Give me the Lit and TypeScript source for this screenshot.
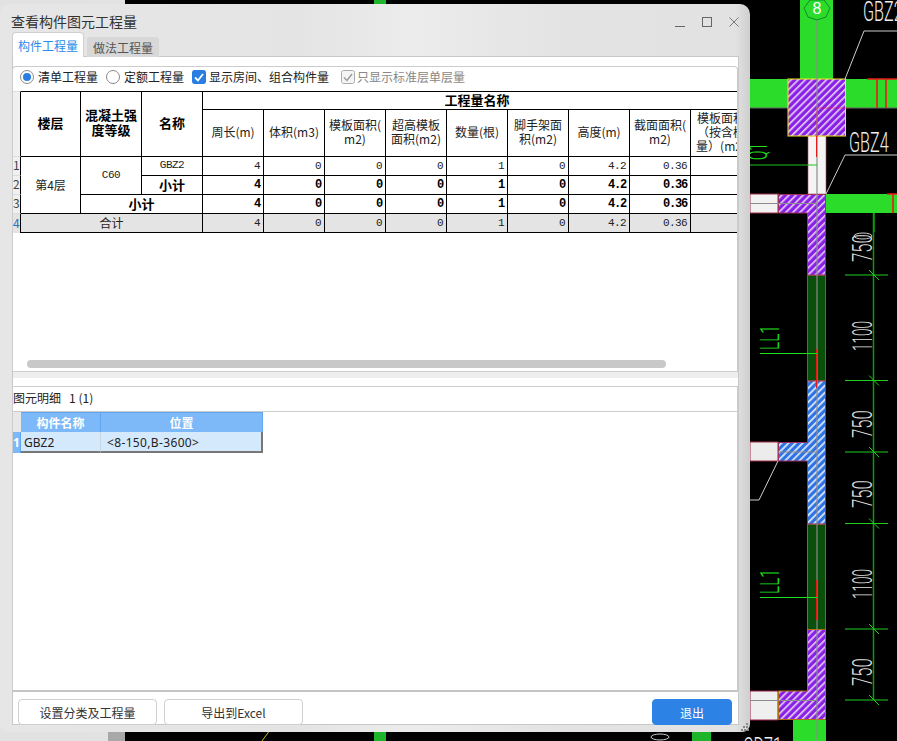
import { LitElement, html, css, svg } from 'lit';
import { customElement } from 'lit/decorators.js';

const HEADS = ['周长(m)', '体积(m3)', '模板面积(<br>m2)', '超高模板<br>面积(m2)', '数量(根)', '脚手架面<br>积(m2)', '高度(m)', '截面面积(<br>m2)', '模板面积<br>（按含模<br>量）(m2)'];
const VALUES = ['4', '0', '0', '0', '1', '0', '4.2', '0.36', ''];

@customElement('cad-view')
export class CadView extends LitElement {
  static styles = css`
    :host { position: absolute; inset: 0; display: block; }
    svg { display: block; }
    .label { font-family: Roboto, "Liberation Sans", sans-serif; font-weight: 300; }
  `;

  dim(y: number, text: string) {
    const sx = text.length === 3 ? 0.62 : 0.5;
    return svg`<text class="label" font-size="27" fill="#ddd" transform="translate(872,${y}) rotate(-90) scale(${sx},1)">${text}</text>`;
  }

  tick(y: number) {
    return svg`
      <line x1="845" x2="888" y1=${y} y2=${y} stroke="#1fd01f"/>
      <line x1="869" x2="879" y1=${y - 5} y2=${y + 5} stroke="#1fd01f"/>`;
  }

  render() {
    const g = '#2bdc2b';
    return html`<svg width="897" height="741" viewBox="0 0 897 741">
      <defs>
        <pattern id="purple" width="5" height="5" patternUnits="userSpaceOnUse" patternTransform="rotate(45)">
          <rect width="5" height="5" fill="#8a1fe6"/><rect width="1.6" height="5" fill="#e6d4fa"/>
        </pattern>
        <pattern id="blue" width="5" height="5" patternUnits="userSpaceOnUse" patternTransform="rotate(45)">
          <rect width="5" height="5" fill="#2f72e4"/><rect width="1.8" height="5" fill="#d6e6fb"/>
        </pattern>
      </defs>
      <rect width="897" height="741" fill="#000"/>
      <rect width="125" height="741" fill="#e2e2e2"/>
      <rect x="108" y="732" width="17" height="9" fill="#a8a8a8"/>
      <rect x="374" width="12" height="6" fill="#1fb52a"/>
      <rect x="374" y="730" width="12" height="11" fill="#1fb52a"/>
      <rect x="692" y="730" width="19" height="11" fill="#1fb52a"/>
      <line x1="262" y1="741" x2="270" y2="730" stroke="#c8c020"/>
      <ellipse cx="660" cy="737" rx="9" ry="3" fill="none" stroke="#ccc"/>

      <rect x="800" width="33" height="79" fill=${g}/>
      <rect x="750" y="79" width="147" height="29" fill=${g}/>
      <line x1="750" x2="897" y1="108" y2="108" stroke="#666"/>
      <rect x="826" y="194" width="71" height="19" fill=${g}/>
      <rect x="793" y="720" width="33" height="21" fill=${g}/>

      <rect x="808" y="136" width="18" height="58" fill="#f4f4f4" stroke="#b05060" stroke-width=".6"/>
      <rect x="750" y="194" width="28" height="19" fill="#f2f2f2" stroke="#a03048"/>
      <rect x="750" y="442" width="28" height="19" fill="#ececec" stroke="#a03048"/>
      <rect x="750" y="691" width="28" height="29" fill="#efefef" stroke="#902040"/>

      <rect x="807.5" y="275.5" width="18" height="105" fill="#0a4f0a" stroke="#6f6a10"/>
      <rect x="807.5" y="524.5" width="18" height="105" fill="#0a4f0a" stroke="#8a6a10"/>

      <rect x="788" y="79" width="57.5" height="57" fill="url(#purple)" stroke="#f2ee10"/>
      <path d="M778.5 194.5H825.5V275H807.5V213H778.5Z" fill="url(#purple)" stroke="#a03060"/>
      <path d="M807.5 381H825.5V524H807.5V461H778.5V442.5H807.5Z" fill="url(#blue)" stroke="#a03060"/>
      <path d="M807.5 629.5H825.5V719.5H778.5V691H807.5Z" fill="url(#purple)" stroke="#b07010"/>

      <line x1="817" x2="817" y1="0" y2="741" stroke="#8c8c8c" stroke-width="1.2"/>
      <line x1="750" x2="817" y1="203.500" y2="203.500" stroke="#8c8c8c"/>
      <line x1="778" x2="817" y1="452" y2="452" stroke="#8c8c8c"/>
      <line x1="750" x2="817" y1="700.500" y2="700.500" stroke="#8c8c8c"/>

      <path d="M804 8 810 0H824L830 8 826 17 817 20 808 17Z" fill=${g} stroke="#118a2a"/>
      <text x="817" y="14" text-anchor="middle" font-size="16" fill="#fff" font-family="Liberation Sans, sans-serif">8</text>

      <path d="M845 79 864 31H897M826 194 845 155H897M778 461 759 500H750" fill="none" stroke="#ccc"/>
      <text class="label" font-size="27" fill="#eee" transform="translate(863,21) scale(.6,1)">GBZ2</text>
      <text class="label" font-size="27" fill="#eee" transform="translate(849,152) scale(.6,1)">GBZ4</text>
      <text class="label" font-size="27" fill="#eee" transform="translate(743,757) scale(.6,1)">CD71</text>

      <path d="M867 79H897M877 79V108M886 79V108M887 194H897M893 194V213" fill="none" stroke="#f01818" stroke-width="1.6"/>
      <path d="M817 108H850M817 108V136" fill="none" stroke="#e81818" stroke-width="1" opacity=".5"/>
      <path d="M816.500 136V157M816.500 349V388M816.500 580V620" fill="none" stroke="#e81818" stroke-width="1"/>
      <line x1="874" x2="874" y1="213" y2="232" stroke="#0a9a0a" stroke-width="1.500"/>
      <ellipse cx="863" cy="236" rx="9" ry="3" fill="none" stroke="#ccc"/>

      <line x1="750" x2="817" y1="165" y2="165" stroke="#1fc01f"/>
      <line x1="760" x2="817" y1="353.500" y2="353.500" stroke="#1fe01f"/>
      <line x1="760" x2="817" y1="597.500" y2="597.500" stroke="#1fe01f"/>
      <text class="label" font-size="25" fill="#1fe01f" transform="translate(767,160) rotate(-90) scale(.55,1)">Q1</text>
      <text class="label" font-size="25" fill="#1fe01f" transform="translate(779,350) rotate(-90) scale(.62,1)">LL1</text>
      <text class="label" font-size="25" fill="#1fe01f" transform="translate(779,594) rotate(-90) scale(.62,1)">LL1</text>

      <line x1="873.500" x2="873.500" y1="213" y2="700" stroke="#0a9a0a" stroke-width="1.500"/>
      ${[275, 380.5, 452, 523.5, 629, 700].map((y) => this.tick(y))}
      ${this.dim(262, '750')}${this.dim(351, '1100')}${this.dim(438, '750')}
      ${this.dim(508, '750')}${this.dim(599, '1100')}${this.dim(686, '750')}
    </svg>`;
  }
}

@customElement('app-root')
export class AppRoot extends LitElement {
  static styles = css`
    :host {
      display: block; position: relative; width: 897px; height: 741px; overflow: hidden;
      font-family: "Noto Sans CJK SC", "Noto Sans", sans-serif; font-size: 12px; color: #222;
    }
    .dialog {
      position: absolute; left: 0; top: 4px; width: 750px; height: 728px; box-sizing: border-box;
      display: flex; flex-direction: column; padding: 0 11px 7px 12px;
      border-radius: 10px 10px 8px 8px;
      background: linear-gradient(90deg, #e6e6e6 0, #e4e4e4 40%, #ececec 55%, #e3e3e3 75%, #e2e2e2 98%, #cfcfcf 100%);
    }
    .titlebar { height: 29px; flex: none; display: flex; align-items: center; justify-content: space-between; }
    .title { font-size: 14px; margin-left: -1px; margin-top: 5px; color: #333; }
    .controls { display: flex; gap: 17px; align-items: center; margin-top: 7px; }
    .controls svg { display: block; }
    .tabs { height: 24px; flex: none; display: flex; align-items: flex-end; gap: 3px; margin-bottom: -1px; position: relative; }
    .tab { width: 72px; display: flex; align-items: center; justify-content: center; box-sizing: border-box; }
    .tab.on {
      height: 25px; background: #fff; color: #2a8be8; border: 1px solid #cfcfcf; border-bottom: 0;
      border-radius: 4px 4px 0 0;
    }
    .tab.off { height: 20px; background: #d8d8d8; color: #555; border-radius: 3px 3px 0 0; }
    .main {
      flex: 1; min-height: 0; background: #fff; border: 1px solid #c8c8c8; display: flex; flex-direction: column;
      padding-top: 9px;
    }
    .upper {
      height: 305px; flex: none; box-sizing: border-box; border: 1px solid #ccc; border-bottom: 0;
      border-radius: 4px 4px 0 0; display: flex; flex-direction: column; margin-left: -1px;
    }
    .toolbar { height: 24px; flex: none; display: flex; align-items: center; padding-left: 7px; box-sizing: border-box; padding-bottom: 5px; }
    .opt { display: flex; align-items: center; gap: 4px; margin-right: 8px; white-space: nowrap; }
    .opt.dim { color: #888; margin-left: 2px; gap: 2px; }
    .opt.chk { gap: 3px; margin-right: 10px; }
    .radio {
      width: 14px; height: 14px; border-radius: 50%; border: 1px solid #8a8a8a; box-sizing: border-box; background: #fff;
      display: flex; align-items: center; justify-content: center;
    }
    .radio.on::after { content: ""; width: 8px; height: 8px; border-radius: 50%; background: #2a7de1; }
    .box { width: 14px; height: 14px; border-radius: 2px; display: block; }
    .grid-wrap { flex: 1; min-height: 0; overflow: hidden; }
    table { border-collapse: separate; border-spacing: 0; table-layout: fixed; }
    .quantities { width: 738px; }
    .quantities th, .quantities td {
      border-right: 1px solid #000; border-bottom: 1px solid #000; padding: 0 0 2px; box-sizing: border-box;
      text-align: center; line-height: 13px; font-weight: 400; overflow: hidden; white-space: nowrap; color: #222;
    }
    .quantities tr:first-child th { border-top: 1px solid #000; }
    .quantities th.strong { font-weight: 700; font-size: 13px; line-height: 15px; color: #000; padding-bottom: 4px; }
    .quantities tr.h1 th:last-child { padding-bottom: 2px; line-height: 13px; }
    .quantities .h1 { height: 19px; }
    .quantities .h2 { height: 47px; }
    .quantities .r { height: 19px; }
    .quantities .h2 th { line-height: 14px; }
    .quantities td.num {
      text-align: right; padding: 0 3px 0 0; font-family: "Liberation Mono", monospace; font-size: 11px; letter-spacing: -.6px;
    }
    .quantities td.mono { padding: 0 0 1px; font-family: "Liberation Mono", monospace; font-size: 11px; letter-spacing: -.5px; }
    .quantities .b td { font-weight: 700; font-size: 13px; color: #000; }
    .quantities .b td.num { font-size: 12px; letter-spacing: -1.2px; }
    .quantities .total td { background: #e4e4e4; }
    .quantities .rn, .quantities .b .rn, .details .rn {
      background: #f0f0f0; color: #444; font-size: 12px; font-weight: 400; line-height: 12px; text-align: left;
    }
    .quantities .rn { border-bottom-color: #ddd; }
    .quantities tr:first-child .rn { border-top: 1px solid #ddd; }
    .quantities .total .rn { background: #e4e4e4; color: #2a6fc0; border-bottom: 0; }
    .scroll { height: 8px; flex: none; margin: 0 71px 3px 14px; border-radius: 4px; background: #c8c8c8; }
    .split { height: 6px; flex: none; background: #eee; border-top: 1px solid #ccc; }
    .gap { height: 8px; flex: none; }
    .lower {
      flex: 1; min-height: 0; box-sizing: border-box; border: 1px solid #ccc; border-bottom: 2px solid #c4c4c4; display: flex; flex-direction: column;
      margin-left: -1px;
    }
    .caption { height: 25px; flex: none; display: flex; align-items: center; border-bottom: 1px solid #ccc; white-space: pre; padding-bottom: 4px; box-sizing: border-box; }
    .details { width: 250px; }
    .details th, .details td { padding: 0; box-sizing: border-box; overflow: hidden; }
    .details th { height: 20px; background: #7db8f9; color: #fff; font-weight: 700; border-right: 1px solid #5fa5ef; border-top: 1px solid #5fa5ef; text-align: center; padding-bottom: 1px; }
    .details td { height: 21px; background: #d5e9fd; border-right: 1px solid #c8d4e0; border-bottom: 2px solid #777; padding: 1px 0 0 3px; font-family: "Noto Sans", sans-serif; }
    .details td.pos { padding-left: 6px; border-right: 2px solid #777; letter-spacing: .35px; }
    .details th.rn { background: #e8e8e8; border: 0; }
    .details td.rn { background: #7db8f9; color: #fff; font-weight: 700; padding: 0; text-align: center; border-right: 1px solid #5fa5ef; border-bottom: 0; }
    .footer { height: 32px; flex: none; display: flex; align-items: flex-start; padding: 7px 6px 0 5px; gap: 7px; box-sizing: border-box; }
    .btn {
      width: 139px; height: 26px; box-sizing: border-box; border: 1px solid #d0d0d0; border-radius: 4px; background: #fff;
      display: flex; align-items: center; justify-content: center; color: #333;
    }
    .btn.primary { width: 80px; margin-left: auto; background: #2d82e6; border-color: #2d82e6; color: #fff; }
    .grip { position: absolute; right: 1px; bottom: 1px; display: block; }
  `;

  renderRowValues() {
    return VALUES.map((v) => html`<td class="num">${v}</td>`);
  }

  render() {
    return html`
      <cad-view></cad-view>
      <div class="dialog">
        <div class="titlebar">
          <div class="title">查看构件图元工程量</div>
          <div class="controls">
            <svg width="10" height="10" viewBox="0 0 10 10"><path d="M0 9.500H10" stroke="#666"/></svg>
            <svg width="10" height="10" viewBox="0 0 10 10"><rect x=".5" y=".5" width="9" height="9" fill="none" stroke="#666"/></svg>
            <svg width="10" height="10" viewBox="0 0 10 10"><path d="M.5.5 9.500 9.500M9.500.5 .5 9.500" stroke="#777"/></svg>
          </div>
        </div>
        <div class="tabs">
          <div class="tab on">构件工程量</div>
          <div class="tab off">做法工程量</div>
        </div>
        <div class="main">
          <div class="upper">
            <div class="toolbar">
              <div class="opt"><span class="radio on"></span>清单工程量</div>
              <div class="opt"><span class="radio"></span>定额工程量</div>
              <div class="opt chk">
                <svg class="box" viewBox="0 0 14 14"><rect width="14" height="14" rx="2" fill="#2a7de1"/><path d="M3 7.500 6 10.500 11 4" fill="none" stroke="#fff" stroke-width="1.800"/></svg>
                显示房间、组合构件量
              </div>
              <div class="opt dim">
                <svg class="box" viewBox="0 0 14 14"><rect x=".5" y=".5" width="13" height="13" rx="2" fill="#f4f4f4" stroke="#aaa"/><path d="M3 7.500 6 10.500 11 4" fill="none" stroke="#999" stroke-width="1.400"/></svg>
                只显示标准层单层量
              </div>
            </div>
            <div class="grid-wrap">
              <table class="quantities">
                <colgroup>
                  <col style="width:8px" /><col style="width:60px" />
                  ${Array.from({ length: 11 }, () => html`<col style="width:61px" />`)}
                </colgroup>
                <tr class="h1">
                  <th class="rn" rowspan="2"></th>
                  <th class="strong" rowspan="2">楼层</th>
                  <th class="strong" rowspan="2">混凝土强<br />度等级</th>
                  <th class="strong" rowspan="2">名称</th>
                  <th class="strong" colspan="9">工程量名称</th>
                </tr>
                <tr class="h2">
                  ${HEADS.map((h) => html`<th .innerHTML=${h}></th>`)}
                </tr>
                <tr class="r">
                  <td class="rn">1</td>
                  <td rowspan="3">第4层</td>
                  <td class="mono" rowspan="2">C60</td>
                  <td class="mono">GBZ2</td>
                  ${this.renderRowValues()}
                </tr>
                <tr class="r b">
                  <td class="rn">2</td>
                  <td>小计</td>
                  ${this.renderRowValues()}
                </tr>
                <tr class="r b">
                  <td class="rn">3</td>
                  <td colspan="2">小计</td>
                  ${this.renderRowValues()}
                </tr>
                <tr class="r total">
                  <td class="rn">4</td>
                  <td colspan="3">合计</td>
                  ${this.renderRowValues()}
                </tr>
              </table>
            </div>
            <div class="scroll"></div>
          </div>
          <div class="split"></div>
          <div class="gap"></div>
          <div class="lower">
            <div class="caption">图元明细   1 (1)</div>
            <table class="details">
              <colgroup><col style="width:8px" /><col style="width:80px" /><col style="width:162px" /></colgroup>
              <tr><th class="rn"></th><th>构件名称</th><th>位置</th></tr>
              <tr><td class="rn">1</td><td>GBZ2</td><td class="pos">&lt;8-150,B-3600&gt;</td></tr>
            </table>
          </div>
          <div class="footer">
            <div class="btn">设置分类及工程量</div>
            <div class="btn">导出到Excel</div>
            <div class="btn primary">退出</div>
          </div>
        </div>
        <svg class="grip" width="8" height="8" viewBox="0 0 8 8" fill="#888">
          <rect x="5" y="0" width="2" height="2"/><rect x="2" y="3" width="2" height="2"/><rect x="5" y="3" width="2" height="2"/>
          <rect x="0" y="6" width="2" height="2"/><rect x="3" y="6" width="2" height="2"/><rect x="6" y="6" width="2" height="2"/>
        </svg>
      </div>
    `;
  }
}
